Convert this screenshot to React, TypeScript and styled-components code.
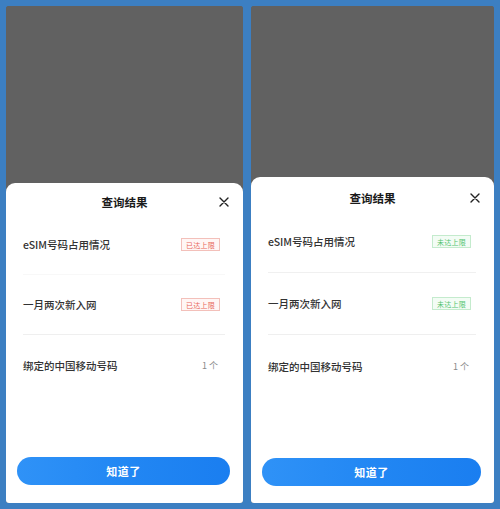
import React from "react";
import styled, { createGlobalStyle } from "styled-components";

const GlobalStyle = createGlobalStyle`
  html, body {
    margin: 0;
    padding: 0;
    background: #3c7fc2;
  }
  body {
    font-family: "Noto Sans CJK SC", "Noto Sans", sans-serif;
  }
`;

const Page = styled.div`
  width: 500px;
  height: 509px;
  box-sizing: border-box;
  padding: 6px 6px 6px 6px;
  display: flex;
  gap: 8px;
  background: #3c7fc2;
`;

const Phone = styled.div<{ $w: number }>`
  width: ${(p) => p.$w}px;
  height: 497px;
  display: flex;
  flex-direction: column;
  border-radius: 3px;
  overflow: hidden;
  background: #616161;
`;

const Overlay = styled.div`
  flex: 1;
  background: #616161;
`;

const Sheet = styled.div<{ $h: number }>`
  height: ${(p) => p.$h}px;
  background: #ffffff;
  border-radius: 9px 9px 0 0;
  display: flex;
  flex-direction: column;
`;

const Header = styled.div<{ $h: number; $pt: number }>`
  height: ${(p) => p.$h}px;
  box-sizing: border-box;
  padding-top: ${(p) => p.$pt}px;
  position: relative;
  display: flex;
  justify-content: center;
  align-items: flex-start;
`;

const Title = styled.div`
  font-size: 11.5px;
  line-height: 14px;
  font-weight: 700;
  color: #1a1a1a;
`;

const Close = styled.div<{ $top: number }>`
  position: absolute;
  right: 14px;
  top: ${(p) => p.$top}px;
  width: 10px;
  height: 10px;
  display: flex;
`;

const List = styled.div`
  margin: 0 18px 0 17px;
  display: flex;
  flex-direction: column;
`;

const Row = styled.div<{ $h: number; $line: string }>`
  height: ${(p) => p.$h}px;
  box-sizing: border-box;
  display: flex;
  align-items: center;
  justify-content: space-between;
  border-bottom: 1px solid ${(p) => p.$line};
  &:last-child {
    border-bottom: none;
  }
`;

const Label = styled.div`
  font-size: 10.5px;
  font-weight: 500;
  color: #333333;
`;

const Badge = styled.div<{ $ok: boolean }>`
  margin-right: 5px;
  width: 39px;
  height: 13px;
  box-sizing: border-box;
  display: flex;
  align-items: center;
  justify-content: center;
  font-size: 7px;
  letter-spacing: 0.3px;
  border: 1px solid ${(p) => (p.$ok ? "#c4ebcd" : "#f3c0ba")};
  background: ${(p) => (p.$ok ? "#f3fcf5" : "#fff6f5")};
  color: ${(p) => (p.$ok ? "#52c36e" : "#e8675b")};
`;

const Count = styled.div`
  margin-right: 7px;
  font-size: 9px;
  color: #8a8a8a;
  display: flex;
  gap: 2px;
`;

const Spacer = styled.div`
  flex: 1;
`;

const Button = styled.div<{ $mb: number }>`
  margin: 0 13px ${(p) => p.$mb}px 11px;
  height: 28px;
  border-radius: 14px;
  background: linear-gradient(90deg, #2f92f7 0%, #2186f3 55%, #1a7ef0 100%);
  display: flex;
  align-items: center;
  justify-content: center;
  color: #ffffff;
  font-size: 11px;
  font-weight: 700;
  letter-spacing: 0.5px;
`;

const CloseIcon = () => (
  <svg width="10" height="10" viewBox="0 0 10 10">
    <path d="M1 1 L9 9 M9 1 L1 9" stroke="#222" strokeWidth="1.4" strokeLinecap="round" />
  </svg>
);

interface PanelProps {
  width: number;
  sheetH: number;
  headH: number;
  titlePad: number;
  rowH: number;
  ok: boolean;
  btnMb: number;
}

const Panel: React.FC<PanelProps> = ({ width, sheetH, headH, titlePad, rowH, ok, btnMb }) => {
  const text = ok ? "未达上限" : "已达上限";
  return (
    <Phone $w={width}>
      <Overlay />
      <Sheet $h={sheetH}>
        <Header $h={headH} $pt={titlePad}>
          <Title>查询结果</Title>
          <Close $top={titlePad + 2}>
            <CloseIcon />
          </Close>
        </Header>
        <List>
          <Row $h={rowH} $line={ok ? "#f0f0f0" : "#f8f8f8"}>
            <Label>eSIM号码占用情况</Label>
            <Badge $ok={ok}>{text}</Badge>
          </Row>
          <Row $h={rowH} $line="#efefef">
            <Label>一月两次新入网</Label>
            <Badge $ok={ok}>{text}</Badge>
          </Row>
          <Row $h={rowH} $line="#efefef">
            <Label>绑定的中国移动号码</Label>
            <Count>
              <span>1</span>
              <span>个</span>
            </Count>
          </Row>
        </List>
        <Spacer />
        <Button $mb={btnMb}>知道了</Button>
      </Sheet>
    </Phone>
  );
};

export default function App() {
  return (
    <>
      <GlobalStyle />
      <Page>
        <Panel width={237} sheetH={320} headH={32} titlePad={12} rowH={60} ok={false} btnMb={18} />
        <Panel width={243} sheetH={326} headH={34} titlePad={14} rowH={62} ok={true} btnMb={17} />
      </Page>
    </>
  );
}
